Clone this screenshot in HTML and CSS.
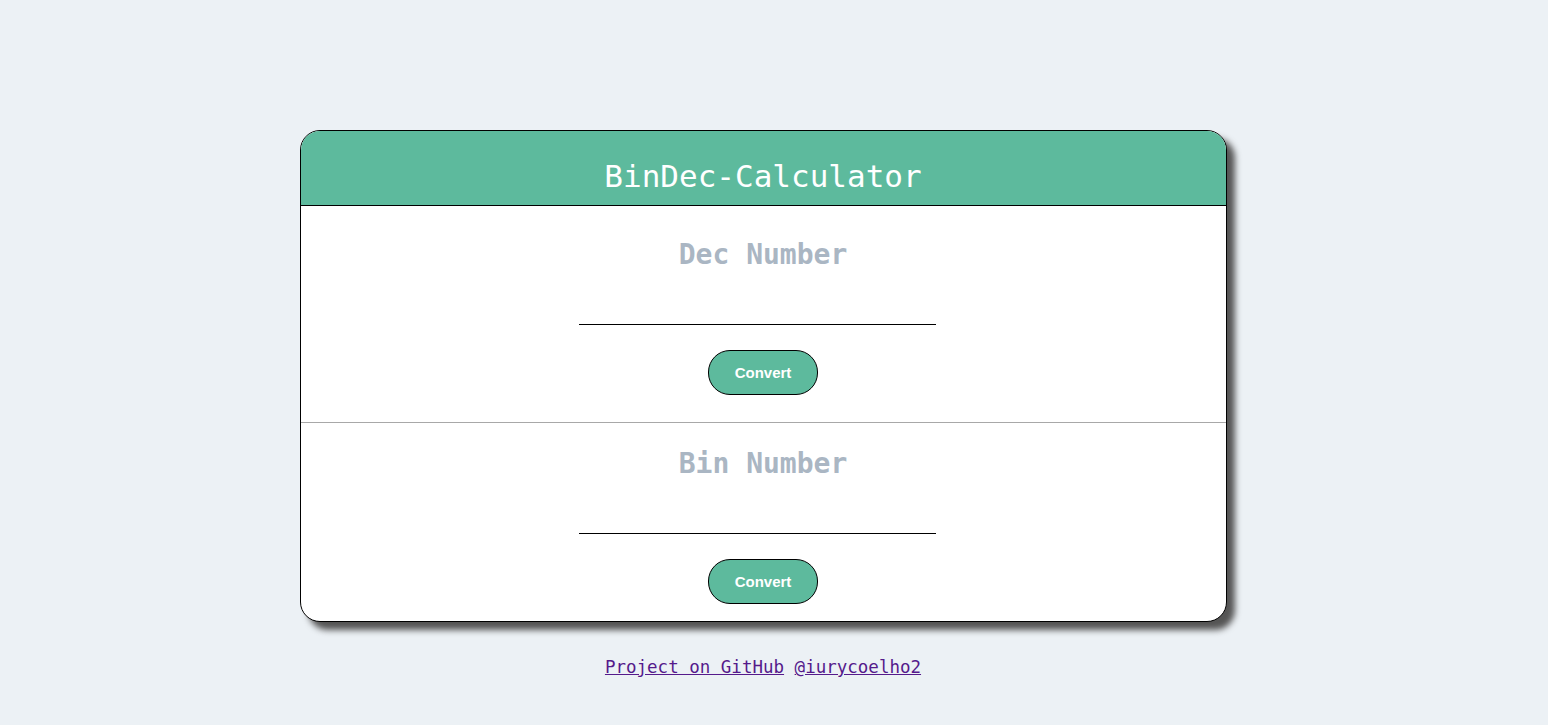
FILE: index.html
```
<!DOCTYPE html>
<html lang="en">
<head>
<meta charset="utf-8">
<title>BinDec-Calculator</title>
<link rel="stylesheet" href="styles.css">
</head>
<body>
<main class="page">
  <div class="card">
    <header class="card-header">
      <h1 class="title">BinDec-Calculator</h1>
    </header>
    <section class="panel panel-first">
      <h2 class="label">Dec Number</h2>
      <input class="field" type="text">
      <button class="btn">Convert</button>
    </section>
    <section class="panel panel-second">
      <h2 class="label">Bin Number</h2>
      <input class="field" type="text">
      <button class="btn">Convert</button>
    </section>
  </div>
  <footer class="footer">
    <a class="link" href="#">Project on GitHub</a> <a class="link" href="#">@iurycoelho2</a>
  </footer>
</main>
</body>
</html>
```
FILE: styles.css
```
html, body {
  margin: 0;
  padding: 0;
  background: #ecf1f5;
}
body {
  font-family: "DejaVu Sans Mono", "Liberation Mono", monospace;
}
.page {
  display: flex;
  flex-direction: column;
  align-items: center;
  padding: 130px 22px 0 0;
}
.card {
  width: 925px;
  background: #fff;
  border: 1px solid #000;
  border-radius: 20px;
  box-shadow: 8px 8px 6px #555;
  overflow: hidden;
  display: flex;
  flex-direction: column;
}
.card-header {
  background: #5dba9d;
  height: 74px;
  border-bottom: 1px solid #000;
  display: flex;
  align-items: flex-end;
  justify-content: center;
}
.title {
  margin: 0 0 11px;
  color: #fff;
  font-weight: normal;
  font-size: 31px;
  line-height: 36px;
}
.panel {
  display: flex;
  flex-direction: column;
  align-items: center;
}
.panel-first {
  padding-top: 31px;
  height: 185px;
  border-bottom: 1px solid #a8a8a8;
}
.panel-second {
  padding-top: 23px;
  height: 175px;
}
.label {
  margin: 0;
  color: #aab6c3;
  font-size: 28px;
  line-height: 36px;
  font-weight: bold;
}
.field {
  width: 357px;
  height: 30px;
  margin: 21px 11px 0 0;
  padding: 0;
  border: none;
  border-bottom: 1px solid #000;
  background: transparent;
  outline: none;
}
.btn {
  margin-top: 25px;
  width: 110px;
  height: 45px;
  border: 1px solid #000;
  border-radius: 22px;
  background: #5dba9d;
  color: #fff;
  font-family: "Liberation Sans", Arial, sans-serif;
  font-weight: bold;
  font-size: 15px;
}
.footer {
  margin-top: 35px;
  font-size: 17.5px;
}
.link {
  color: #551a8b;
}
```
